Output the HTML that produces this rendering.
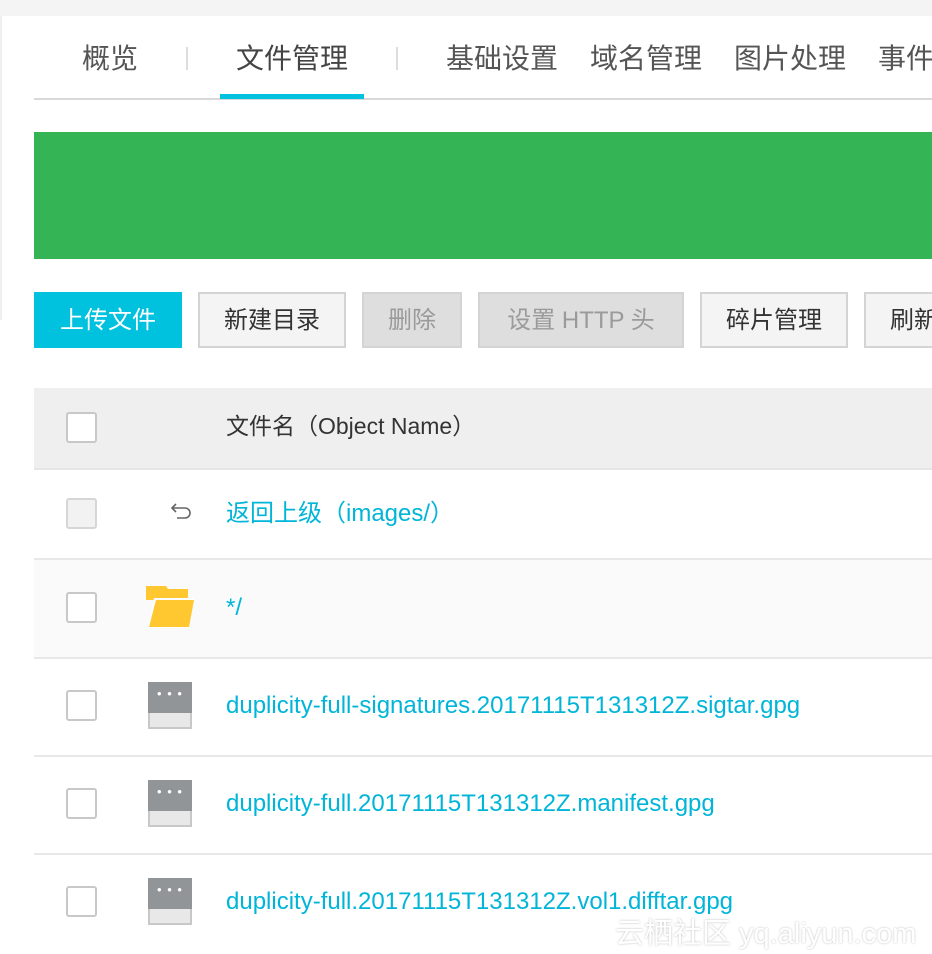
<!DOCTYPE html>
<html><head><meta charset="utf-8"><style>
*{margin:0;padding:0;box-sizing:border-box}
body{width:932px;height:954px;overflow:hidden;background:#fff;position:relative;font-family:"Liberation Sans","Noto Sans CJK SC",sans-serif}
.a{position:absolute}
.tab{position:absolute;top:41px;font-size:28px;color:#555;line-height:36px;white-space:nowrap}
.sep{position:absolute;top:47px;width:2px;height:23px;background:#ddd}
.btn{position:absolute;top:292px;height:56px;border:2px solid #d4d4d4;background:#f4f4f4;color:#333;font-size:24px;line-height:54px;text-align:center;white-space:nowrap;overflow:hidden}
.dis{background:#dedede;color:#9a9a9a}
.row{position:absolute;left:34px;width:898px;border-bottom:2px solid #e8e8e8}
.cb{position:absolute;left:32px;width:31px;height:31px;border:2px solid #c8c8c8;border-radius:3px;background:#fff}
.lk{position:absolute;left:192px;font-size:24px;color:#00b5d8;white-space:nowrap;line-height:30px}
.ic{position:absolute;left:114px;width:44px;height:47px;background:#e8e8e8;border:2px solid #c8c8c8;border-top:none}
.ic::before{content:"";position:absolute;left:-2px;top:0;width:44px;height:31px;background:#929598}
.ic::after{content:"• • •";position:absolute;left:0;width:40px;top:4px;text-align:center;color:#fff;font-size:13px;letter-spacing:1px}
</style></head><body>
<div class="a" style="left:0;top:0;width:932px;height:16px;background:#f4f4f4"></div>
<div class="a" style="left:0;top:16px;width:2px;height:304px;background:#eef0f3"></div>
<div class="tab" style="left:82px">概览</div>
<div class="sep" style="left:186px"></div>
<div class="tab" style="left:236px;color:#444">文件管理</div>
<div class="sep" style="left:396px"></div>
<div class="tab" style="left:446px">基础设置</div>
<div class="tab" style="left:590px">域名管理</div>
<div class="tab" style="left:734px">图片处理</div>
<div class="tab" style="left:878px">事件</div>
<div class="a" style="left:34px;top:98px;width:898px;height:2px;background:#d9d9d9"></div>
<div class="a" style="left:220px;top:94px;width:144px;height:5px;background:#00c1de"></div>
<div class="a" style="left:34px;top:132px;width:898px;height:127px;background:#34b454"></div>
<div class="btn" style="left:34px;width:148px;background:#00c1de;border-color:#00c1de;color:#fff">上传文件</div>
<div class="btn" style="left:198px;width:148px">新建目录</div>
<div class="btn dis" style="left:362px;width:100px">删除</div>
<div class="btn dis" style="left:478px;width:206px">设置 HTTP 头</div>
<div class="btn" style="left:700px;width:148px">碎片管理</div>
<div class="btn" style="left:864px;width:100px;text-align:left;padding-left:24px">刷新</div>
<div class="row" style="top:388px;height:82px;background:#efefef;border-bottom-color:#e6e6e6"><div class="cb" style="top:24px"></div><div class="lk" style="color:#333;top:23px;font-size:23px">文件名（Object Name）</div></div>
<div class="row" style="top:470px;height:90px"><div class="cb" style="top:28px;background:#f2f2f2;border-color:#d6d6d6"></div>
<svg class="a" style="left:136px;top:30px" width="24" height="24" viewBox="0 0 24 24" fill="none" stroke="#666" stroke-width="1.6"><path d="M6 4 L2 8 L6 12 M2 8 H15 a5 5 0 0 1 0 10 H7"/></svg>
<div class="lk" style="top:29px">返回上级（images/）</div></div>
<div class="row" style="top:560px;height:99px;background:#fafafa"><div class="cb" style="top:32px"></div>
<svg class="a" style="left:112px;top:26px" width="50" height="44" viewBox="0 0 50 44"><path d="M0 0 H20 L22 3 H42 V14 H0Z" fill="#ffc730"/><path d="M8 12 H48 L42 42 H2Z" fill="#fff"/><path d="M10 14 H48 L43 41 H3Z" fill="#ffc730"/></svg>
<div class="lk" style="top:33px">*/</div></div>
<div class="row" style="top:659px;height:98px"><div class="ic" style="top:23px"></div><div class="cb" style="top:31px"></div><div class="lk" style="top:32px">duplicity-full-signatures.20171115T131312Z.sigtar.gpg</div></div>
<div class="row" style="top:757px;height:98px"><div class="ic" style="top:23px"></div><div class="cb" style="top:31px"></div><div class="lk" style="top:32px">duplicity-full.20171115T131312Z.manifest.gpg</div></div>
<div class="row" style="top:855px;height:99px;border:none"><div class="ic" style="top:23px"></div><div class="cb" style="top:31px"></div><div class="lk" style="top:32px">duplicity-full.20171115T131312Z.vol1.difftar.gpg</div></div>
<div class="a" style="left:615px;top:910px;font-size:29px;color:#fff;text-shadow:0 0 2px #bbb;white-space:nowrap">云栖社区 yq.aliyun.com</div>
</body></html>
